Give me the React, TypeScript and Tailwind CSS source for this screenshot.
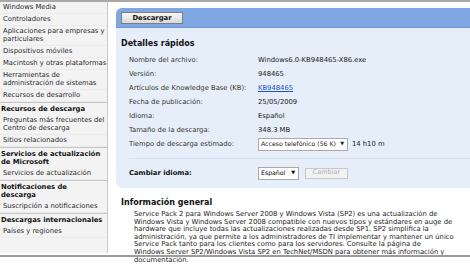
import React from "react";

const font = "font-['DejaVu_Sans',Verdana,sans-serif]";

function Item({ children }: { children: React.ReactNode }) {
  return (
    <div className="pl-[3px] pt-[1px] pb-[2px] leading-[8px] border-b border-[#ebebeb] text-[#2a2a2a]">
      {children}
    </div>
  );
}

function Header({ children }: { children: React.ReactNode }) {
  return (
    <div className="pl-[1px] pt-[2px] pb-[2px] leading-[8px] border-t border-[#c4c4c4] font-bold text-[#111]">
      {children}
    </div>
  );
}

function Row({ label, children }: { label: string; children: React.ReactNode }) {
  return (
    <div className="flex h-[14px] items-center">
      <div className="w-[142px] pl-[13px] text-[#333]">{label}</div>
      <div className="flex items-center text-[#222]">{children}</div>
    </div>
  );
}

export default function App() {
  const para = [
    "Service Pack 2 para Windows Server 2008 y Windows Vista (SP2) es una actualización de",
    "Windows Vista y Windows Server 2008 compatible con nuevos tipos y estándares en auge de",
    "hardware que incluye todas las actualizaciones realizadas desde SP1. SP2 simplifica la",
    "administración, ya que permite a los administradores de TI implementar y mantener un único",
    "Service Pack tanto para los clientes como para los servidores. Consulte la página de",
    "Windows Server SP2/Windows Vista SP2 en TechNet/MSDN para obtener más información y",
    "documentación.",
  ];
  return (
    <div className={`relative w-[470px] h-[265px] overflow-hidden bg-white ${font} text-[6.8px]`}>
      <div className="h-[2px] bg-[#a8a8a8]" />
      <div className="flex">
        <aside className="w-[108px] h-[251px] shrink-0 bg-[#f3f3f3] border-r border-[#c8c8c8] overflow-hidden whitespace-nowrap">
          <Item>Windows Media</Item>
          <Item>Controladores</Item>
          <Item>
            Aplicaciones para empresas y
            <br />
            particulares
          </Item>
          <Item>Dispositivos móviles</Item>
          <Item>Macintosh y otras plataformas</Item>
          <Item>
            Herramientas de
            <br />
            administración de sistemas
          </Item>
          <Item>Recursos de desarrollo</Item>
          <Header>Recursos de descarga</Header>
          <Item>
            Preguntas más frecuentes del
            <br />
            Centro de descarga
          </Item>
          <Item>Sitios relacionados</Item>
          <Header>
            Servicios de actualización
            <br />
            de Microsoft
          </Header>
          <Item>Servicios de actualización</Item>
          <Header>
            Notificaciones de
            <br />
            descarga
          </Header>
          <Item>Suscripción a notificaciones</Item>
          <Header>Descargas internacionales</Header>
          <Item>Países y regiones</Item>
        </aside>
        <main className="pl-[8px] pt-[6px] shrink-0 w-[362px]">
          <div className="w-[380px] rounded-l-[6px] overflow-hidden bg-[#e6eef9]">
            <div className="h-[20px] bg-[#7fa7e2] border-b border-[#6d96d6] flex items-center pl-[5px]">
              <button className="h-[12px] w-[62px] border border-[#7d7d7d] bg-gradient-to-b from-[#f7f7f7] to-[#d9d9d9] text-[6.8px] font-bold leading-[10px] text-[#111]">
                Descargar
              </button>
            </div>
            <div className="pt-[10px] pb-[8px]">
              <div className="pl-[5px] text-[8px] font-bold leading-[12px] text-[#111] mb-[3px]">Detalles rápidos</div>
              <Row label="Nombre del archivo:">Windows6.0-KB948465-X86.exe</Row>
              <Row label="Versión:">948465</Row>
              <Row label="Artículos de Knowledge Base (KB):">
                <span className="text-[#1d4fcf] underline">KB948465</span>
              </Row>
              <Row label="Fecha de publicación:">25/05/2009</Row>
              <Row label="Idioma:">Español</Row>
              <Row label="Tamaño de la descarga:">348.3 MB</Row>
              <Row label="Tiempo de descarga estimado:">
                <div className="h-[13px] w-[90px] bg-white border border-[#a9a9a9] flex items-center justify-between pl-[2px] pr-[3px] text-[6.2px]">
                  <span>Acceso telefónico (56 K)</span>
                  <span className="text-[5px]">▼</span>
                </div>
                <span className="ml-[4px]">14 h10 m</span>
              </Row>
              <div className="ml-[13px] mt-[7px] mb-[7px] h-[1px] bg-[#d9e1ec]" />
              <div className="flex h-[14px] items-center">
                <div className="w-[142px] pl-[13px] font-bold text-[#111]">Cambiar idioma:</div>
                <div className="h-[13px] w-[41px] bg-white border border-[#a9a9a9] flex items-center justify-between pl-[2px] pr-[3px] text-[6.2px]">
                  <span>Español</span>
                  <span className="text-[5px]">▼</span>
                </div>
                <div className="ml-[6px] h-[11px] w-[43px] border border-[#c8c8c8] bg-[#f2f2f2] flex items-center justify-center text-[#b0b0b0] text-[6.5px]">
                  Cambiar
                </div>
              </div>
            </div>
          </div>
          <div className="pt-[9px]">
            <div className="pl-[5px] text-[8px] font-bold leading-[11px] text-[#111]">Información general</div>
            <div className="pl-[18px] pt-[3px] leading-[7.6px] text-[#222] whitespace-nowrap">
              {para.map((l, i) => (
                <div key={i}>{l}</div>
              ))}
            </div>
          </div>
        </main>
      </div>
      <div className="absolute left-0 top-[255px] w-full h-[2px] bg-[#9c9c9c]" />
    </div>
  );
}
